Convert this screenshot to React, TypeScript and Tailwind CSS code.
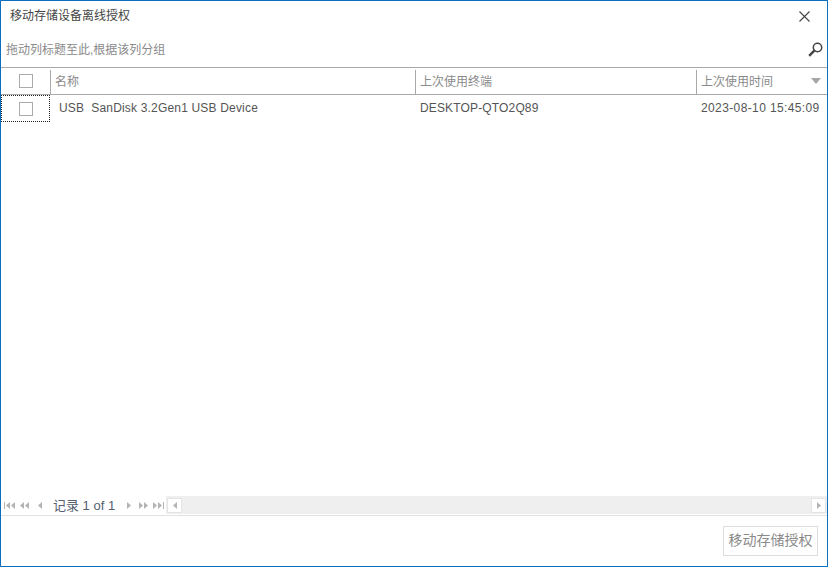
import React from 'react';

const cjk = "font-['Liberation_Sans','Noto_Sans_CJK_SC',sans-serif]";

// グリッドの列幅
const columns = [
  { name: '名称', width: 'w-[365px]' },
  { name: '上次使用终端', width: 'w-[281px]' },
  { name: '上次使用时间', width: 'flex-1' },
];

function Check() {
  return <span className="block w-[14px] h-[14px] border border-[#ababab] bg-white" />;
}

function Tri({ dir, className = '' }: { dir: 'l' | 'r'; className?: string }) {
  return (
    <svg width="4" height="7" viewBox="0 0 4 7" className={className}>
      <path d={dir === 'l' ? 'M4 0V7L0 3.5Z' : 'M0 0V7L4 3.5Z'} fill="#b4b4b4" />
    </svg>
  );
}

function Bar() {
  return <span className="block w-px h-[7px] bg-[#b4b4b4]" />;
}

function NavButton({ children }: { children: React.ReactNode }) {
  return <span className="flex items-center justify-center w-[15px] h-[16px] shrink-0">{children}</span>;
}

export default function App() {
  return (
    <div className={`w-[828px] h-[567px] flex flex-col bg-white border border-[#0b6fbe] ${cjk} text-[12px] overflow-hidden`}>
      {/* タイトル */}
      <div className="h-[30px] flex items-center justify-between pl-[9px] pr-[17px] shrink-0">
        <span className="text-[#444444]">移动存储设备离线授权</span>
        <svg width="11" height="11" viewBox="0 0 11 11">
          <path d="M.5.5l10 10M10.5.5l-10 10" stroke="#444" strokeWidth="1.1" fill="none" />
        </svg>
      </div>

      {/* グループパネル */}
      <div className="h-[36px] flex items-center justify-between pl-[5px] pr-[4px] shrink-0">
        <span className="text-[#8a8a8a] mt-[2px]">拖动列标题至此,根据该列分组</span>
        <svg width="15" height="15" viewBox="0 0 15 15">
          <circle cx="9.5" cy="5.5" r="4.2" stroke="#444" strokeWidth="1.5" fill="none" />
          <path d="M6.3 8.7L1.2 13.8" stroke="#444" strokeWidth="2.4" fill="none" />
        </svg>
      </div>

      {/* ヘッダー */}
      <div className="h-[28px] flex border-y border-[#a9a9a9] shrink-0">
        <div className="w-[49px] flex items-center justify-center shrink-0">
          <Check />
        </div>
        {columns.map((col, i) => (
          <div key={col.name} className={`${col.width} flex items-center justify-between pl-[5px] pr-[6px] relative`}>
            <span className="absolute left-0 top-[2px] bottom-0 w-px bg-[#a9a9a9]" />
            <span className="text-[#8a8a8a] mt-[2px]">{col.name}</span>
            {i === 2 && (
              <svg width="10" height="6" viewBox="0 0 10 6">
                <path d="M0 0H10L5 6Z" fill="#a6a6a6" />
              </svg>
            )}
          </div>
        ))}
      </div>

      {/* 行 */}
      <div className="h-[27px] flex items-center shrink-0 text-[#555555]">
        <div className="w-[49px] h-full flex items-center justify-center shrink-0 border border-dotted border-[#222222]">
          <Check />
        </div>
        <div className="w-[365px] pl-[9px] pb-[2px] whitespace-pre tracking-[0.18px]">USB  SanDisk 3.2Gen1 USB Device</div>
        <div className="w-[281px] pl-[5px] pb-[2px] tracking-[0.15px]">DESKTOP-QTO2Q89</div>
        <div className="flex-1 pl-[5px] pb-[2px] tracking-[0.38px] whitespace-nowrap">2023-08-10 15:45:09</div>
      </div>

      <div className="flex-1" />

      {/* ナビゲーター */}
      <div className="h-[19px] flex items-start shrink-0">
        <div className="flex items-center w-[165px] pl-px shrink-0">
          <NavButton><span className="flex items-center gap-[1px]"><Bar /><Tri dir="l" /><Tri dir="l" /></span></NavButton>
          <NavButton><span className="flex items-center gap-[1px]"><Tri dir="l" /><Tri dir="l" /></span></NavButton>
          <NavButton><Tri dir="l" /></NavButton>
          <span className="ml-[6px] text-[13px] text-[#556070] whitespace-nowrap w-[68px] shrink-0">记录 1 of 1</span>
          <NavButton><Tri dir="r" /></NavButton>
          <NavButton><span className="flex items-center gap-[1px]"><Tri dir="r" /><Tri dir="r" /></span></NavButton>
          <NavButton><span className="flex items-center gap-[1px]"><Tri dir="r" /><Tri dir="r" /><Bar /></span></NavButton>
        </div>
        <div className="flex-1 h-[18px] bg-[#efefef] flex items-center justify-between">
          <span className="w-[15px] h-[15px] ml-px bg-white border border-[#e4e4e4] flex items-center justify-center"><Tri dir="l" /></span>
          <span className="w-[15px] h-[15px] mr-px bg-white border border-[#e4e4e4] flex items-center justify-center"><Tri dir="r" /></span>
        </div>
      </div>

      {/* フッター */}
      <div className="h-[51px] border-t border-[#e2e2e2] flex items-center justify-end pr-[9px] shrink-0">
        <button className="w-[95px] h-[30px] border border-[#dddddd] bg-white text-[#8a8a8a] text-[14px] mt-[-1px] whitespace-nowrap">移动存储授权</button>
      </div>
    </div>
  );
}
